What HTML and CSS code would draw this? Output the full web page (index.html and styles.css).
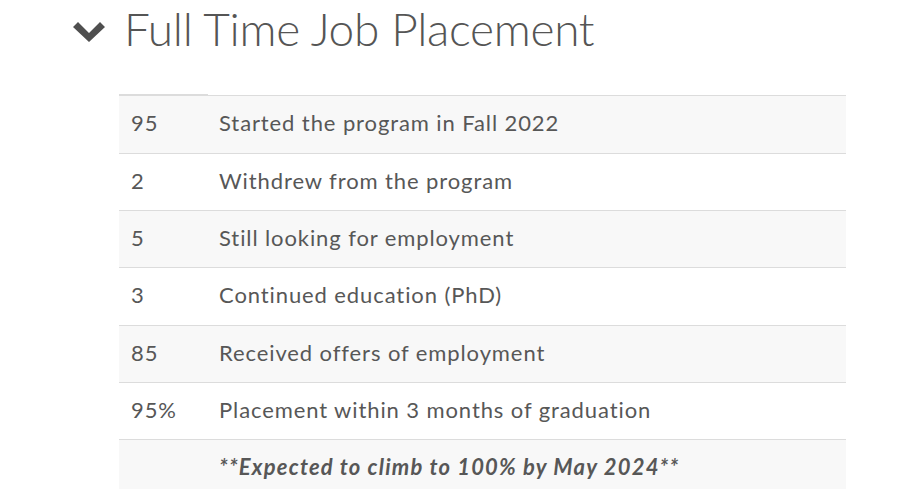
FILE: index.html
```html
<!DOCTYPE html>
<html lang="en">
<head>
<meta charset="utf-8">
<title>Full Time Job Placement</title>
<link rel="stylesheet" href="styles.css">
</head>
<body>
<section class="panel">
  <div class="panel-head">
    <svg class="chevron" width="32" height="20" viewBox="0 0 32 20" aria-hidden="true">
      <path d="M0 5 L5 0 L16 11 L27 0 L32 5 L16 20 Z" fill="#4f4f4f"/>
    </svg>
    <h2 class="title">Full Time Job Placement</h2>
  </div>
  <div class="stats">
    <div class="stats-head"><span class="head-line"></span></div>
    <div class="row shade tall"><span class="num">95</span><span class="label">Started the program in Fall 2022</span></div>
    <div class="row"><span class="num">2</span><span class="label">Withdrew from the program</span></div>
    <div class="row shade"><span class="num">5</span><span class="label">Still looking for employment</span></div>
    <div class="row tall"><span class="num">3</span><span class="label">Continued education (PhD)</span></div>
    <div class="row shade"><span class="num">85</span><span class="label">Received offers of employment</span></div>
    <div class="row"><span class="num">95%</span><span class="label">Placement within 3 months of graduation</span></div>
    <div class="row shade last"><span class="num"></span><span class="label note">**Expected to climb to 100% by May 2024**</span></div>
  </div>
</section>
</body>
</html>
```
FILE: styles.css
```css
html, body {
  margin: 0;
  padding: 0;
  background: #fff;
}
body {
  font-family: "Lato", "Open Sans", Arial, sans-serif;
  color: #575757;
}
.panel {
  padding-left: 73px;
  width: 773px;
}
.panel-head {
  display: flex;
  align-items: center;
  height: 58px;
  gap: 19px;
}
.chevron {
  display: block;
  flex: none;
  margin-top: 5px;
}
.title {
  margin: 0;
  font-weight: 300;
  font-size: 46px;
  line-height: 58px;
  letter-spacing: -0.3px;
  color: #555;
}
.stats {
  margin-left: 46px;
  margin-top: 36px;
  width: 727px;
}
.stats-head {
  height: 1px;
}
.head-line {
  display: block;
  width: 89px;
  height: 1px;
  background: #dcdcdc;
}
.row {
  display: flex;
  align-items: center;
  height: 56px;
  border-top: 1px solid #dcdcdc;
  font-size: 22px;
  letter-spacing: 0.9px;
}
.row.tall {
  height: 57px;
}
.row.shade {
  background: #f8f8f8;
}
.row.last {
  height: 60px;
}
.num,
.label {
  margin-bottom: 4px;
}
.num {
  width: 88px;
  padding-left: 12px;
  flex: none;
}
.note {
  font-style: italic;
  font-weight: 700;
  letter-spacing: 1.2px;
}
.last .num,
.last .label {
  margin-bottom: 8px;
}
```
